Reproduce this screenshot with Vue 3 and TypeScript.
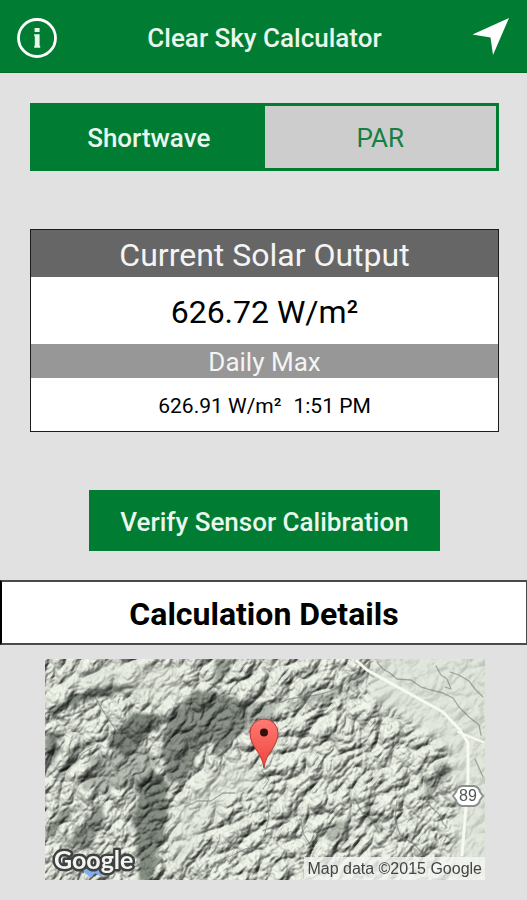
<script setup lang="ts">
import { ref } from 'vue'

type Mode = 'Shortwave' | 'PAR'

const modes: Mode[] = ['Shortwave', 'PAR']
const active = ref<Mode>('Shortwave')
</script>

<template>
  <div class="page">
    <header class="bar">
      <button class="icon-button" type="button" aria-label="Information">
        <svg width="42" height="42" viewBox="0 0 42 42" aria-hidden="true">
          <circle cx="21" cy="21" r="18.5" fill="none" stroke="#fff" stroke-width="2.8" />
          <path d="M18.600 11h5v4h-5zM18.200 17.200h5.400v11.600h.6v2h-6v-2h.6v-9.600h-.6z" fill="#e9f7ec" />
        </svg>
      </button>
      <h1 class="title">Clear Sky Calculator</h1>
      <button class="icon-button" type="button" aria-label="Use my location">
        <svg width="42" height="42" viewBox="0 0 42 42" aria-hidden="true">
          <path d="M38 1 1.500 17.500 19.500 20.500 22 38z" fill="#fff" />
        </svg>
      </button>
    </header>

    <main class="content">
      <div class="segments" role="group" aria-label="Radiation type">
        <button
          v-for="mode in modes"
          :key="mode"
          type="button"
          class="segment"
          :class="{ selected: mode === active }"
          :aria-pressed="mode === active"
          @click="active = mode"
        >
          {{ mode }}
        </button>
      </div>

      <section class="card">
        <h2 class="card-title">Current Solar Output</h2>
        <p class="current">626.72 W/m²</p>
        <h3 class="card-subtitle">Daily Max</h3>
        <p class="daily"><span>626.91 W/m²</span><span>1:51 PM</span></p>
      </section>

      <button class="verify" type="button">Verify Sensor Calibration</button>
    </main>

    <h2 class="details">Calculation Details</h2>

    <div class="map">
      <svg class="map-svg" viewBox="0 0 440 221" role="img" aria-label="Terrain map">
        <defs>
          <filter id="relief" x="0" y="0" width="100%" height="100%" color-interpolation-filters="sRGB">
            <feTurbulence type="turbulence" baseFrequency="0.032 0.05" numOctaves="5" seed="14" result="n" />
            <feColorMatrix in="n" type="matrix" values="0 0 0 0 0  0 0 0 0 0  0 0 0 0 0  1 0 0 0 0" result="h" />
            <feGaussianBlur in="h" stdDeviation="0.4" result="hb" />
            <feDiffuseLighting in="hb" surfaceScale="7" diffuseConstant="1.08" lighting-color="#e6ebe0">
              <feDistantLight azimuth="290" elevation="60" />
            </feDiffuseLighting>
          </filter>
          <filter id="rough" x="-10%" y="-10%" width="120%" height="120%" color-interpolation-filters="sRGB">
            <feTurbulence type="fractalNoise" baseFrequency="0.09" numOctaves="2" seed="5" />
            <feDisplacementMap in="SourceGraphic" scale="14" xChannelSelector="R" yChannelSelector="G" />
            <feGaussianBlur stdDeviation="1.5" />
          </filter>
          <filter id="soft" x="-20%" y="-20%" width="140%" height="140%">
            <feGaussianBlur stdDeviation="5" />
          </filter>
          <linearGradient id="pin" x1="0" y1="0" x2="0" y2="1">
            <stop offset="0" stop-color="#ff7b74" />
            <stop offset="1" stop-color="#ee443d" />
          </linearGradient>
        </defs>

        <rect width="440" height="221" fill="#dbe1d6" />
        <g transform="rotate(-50 220 110)">
          <rect x="-40" y="-140" width="520" height="500" filter="url(#relief)" opacity="0.85" />
        </g>

        <!-- valley floor and bright slopes -->
        <g fill="#dfe5da" filter="url(#soft)">
          <path d="M330 -10H450V230H405L412 150 405 95 385 75 345 50 325 42z" opacity="0.8" />
          <path d="M20 20 60 3 130 5 140 30 120 48 80 32 20 28z" opacity="0.45" />
          <path d="M128 150 165 112 205 98 216 125 175 145 150 190 125 215z" opacity="0.5" />
        </g>

        <!-- shaded slopes -->
        <g class="shade" fill="#6a716b" filter="url(#rough)">
          <path d="M3 50 30 35 60 28 85 25 90 30 50 40 20 48 3 56z" opacity="0.75" />
          <path d="M62 80 82 66 84 54 120 56 114 72 96 80 82 98 65 90z" opacity="0.8" />
          <path d="M126 54 140 35 160 30 180 36 197 45 205 60 196 76 180 90 172 96 166 82 150 96 148 112 136 125 124 122 118 104 116 82z" opacity="0.7" />
          <path d="M197 45 224 42 236 46 228 60 205 78 200 60z" opacity="0.4" />
          <path d="M94 117 108 110 122 122 124 145 119 178 112 205 104 223 92 222 95 190 88 168z" opacity="0.75" />
          <path d="M0 74 16 72 12 95 0 112z" opacity="0.7" />
          <path d="M12 117 36 78 48 84 28 108z" opacity="0.55" />
          <path d="M22 184 38 160 58 146 62 160 42 192z" opacity="0.65" />
          <path d="M0 167 18 152 32 146 16 168 0 184z" opacity="0.65" />
          <path d="M46 96 74 92 104 86 114 104 88 126 56 134 34 128z" opacity="0.4" />
          <path d="M166 24 174 0 190 0 180 20z" opacity="0.6" />
          <path d="M238 44 272 36 300 26 318 8 322 12 304 34 280 42 244 48z" opacity="0.35" />
          <path d="M272 170 298 160 306 172 288 182z" opacity="0.4" />
          <path d="M376 120 398 104 410 108 396 128 380 136z" opacity="0.45" />
          <path d="M320 140 338 168 334 176 318 152z" opacity="0.45" />
        </g>

        <!-- ridge and stream lines -->
        <g fill="none" stroke="#6c746b" stroke-width="1.3" stroke-linecap="round" stroke-linejoin="round" opacity="0.55">
          <path d="M230 45 244 40 258 38 272 36 286 32 300 24 308 16 316 10 328 2" />
          <path d="M332 3 338 10 345 14 352 20 366 21 376 28 386 31 398 34 408 39 414 48 424 58 434 66 436 76" />
          <path d="M391 7 396 16 402 20 406 30 400 28M405 13 414 16 424 22 430 30 438 38" />
          <path d="M380 139 386 148 394 155 398 164 402 169M352 142 350 160 355 176 364 182 370 186 378 195" />
          <path d="M256 160 258 174 264 184 268 190M217 112 224 121 218 130M222 140 224 158 218 182" />
          <path d="M164 215 170 204 178 200 188 196 200 190 210 188 218 180M140 148 152 142 166 142 178 134 190 134" />
          <path d="M2 118 14 108 30 104 38 94 48 88M50 38 58 52 70 70 64 80" />
          <path d="M310 140 316 152 326 160 334 174M430 100 438 118" />
        </g>

        <g fill="none" stroke="#f7f9f2" stroke-linejoin="round" stroke-linecap="round">
          <path d="M312 2 322 11 398 53 415 71 423 84V124L417 196" stroke-width="3" />
          <path d="M413 73 438 83" stroke-width="2" />
        </g>

        <path d="M417 127H429Q434 128 435 133L438 137 435 141Q434 146 429 147H417Q412 146 411 141L408 137 411 133Q412 128 417 127z" fill="#fff" stroke="#8a908a" stroke-width="2" stroke-linejoin="round" />
        <text class="route" x="423" y="142" text-anchor="middle">89</text>

        <path d="M35 207 42 210 48 206 53 211 58 209 57 218 50 214 46 219 39 213z" fill="#80adf3" />
        <text class="logo" x="9" y="210">Google</text>

        <path d="M219 109C217 93 205 88 205 74a14 14 0 0 1 28 0C233 88 221 93 219 109z" fill="url(#pin)" stroke="#b73a34" stroke-width="1" />
        <circle cx="219" cy="73.500" r="4" fill="#31100e" />
      </svg>
      <span class="credit">Map data ©2015 Google</span>
    </div>
  </div>
</template>

<style>
body {
  margin: 0;
  background: #e1e1e1;
}
</style>

<style scoped>
.page {
  font-family: Roboto, 'Liberation Sans', sans-serif;
  background: #e1e1e1;
  color: #000;
  padding-bottom: 20px;
}

h1,
h2,
h3,
p {
  margin: 0;
  font-weight: 400;
  text-align: center;
}

button {
  font-family: inherit;
  margin: 0;
  border: 0;
  border-radius: 0;
  cursor: pointer;
}

.bar {
  display: flex;
  align-items: center;
  justify-content: space-between;
  box-sizing: border-box;
  height: 73px;
  padding: 3px 14px 0 16px;
  background: #007c33;
  border-bottom: 1px solid #006b24;
}

.icon-button {
  display: flex;
  padding: 0;
  background: none;
}

.title {
  color: #e9f7ec;
  font-size: 26px;
  font-weight: 500;
  line-height: 32px;
}

.content {
  display: flex;
  flex-direction: column;
  padding: 30px 28px 29px 30px;
}

.segments {
  display: grid;
  grid-template-columns: 1fr 1fr;
  border: 3px solid #007c33;
  background: #007c33;
}

.segment {
  padding: 16px 0 14px;
  background: #cdcdcd;
  color: #158041;
  font-size: 26px;
  line-height: 32px;
}

.segment.selected {
  background: #007c33;
  color: #e9f7ec;
  font-weight: 500;
}

.card {
  margin-top: 58px;
  border: 1px solid #1c1c1c;
  background: #fff;
}

.card-title {
  padding: 6px 0 3px;
  background: #666;
  color: #f4f4f4;
  font-size: 32px;
  line-height: 38px;
}

.current {
  padding: 16px 0 13px;
  font-size: 32px;
  line-height: 38px;
}

.card-subtitle {
  padding: 2px 0 0;
  background: #979797;
  color: #f4f4f4;
  font-size: 26px;
  line-height: 32px;
}

.daily {
  display: flex;
  justify-content: center;
  gap: 12px;
  padding: 12px 0 9px;
  font-size: 21px;
  line-height: 32px;
}

.verify {
  align-self: center;
  width: 75%;
  margin-top: 58px;
  padding: 16px 0 13px;
  background: #007c33;
  color: #e9f7ec;
  font-size: 26px;
  font-weight: 500;
  line-height: 32px;
}

.details {
  padding: 14px 0 11px;
  border: 2px solid #4a4a4a;
  border-left-color: #000;
  border-right-width: 1px;
  background: #fff;
  font-size: 32px;
  font-weight: 700;
  line-height: 36px;
}

.map {
  position: relative;
  margin: 14px 42px 0 45px;
}

.map-svg {
  display: block;
  width: 100%;
}

.shade {
  mix-blend-mode: multiply;
}

.route {
  font: 400 16px 'Liberation Sans', sans-serif;
  fill: #555;
}

.logo {
  font: 700 25px Lato, sans-serif;
  fill: #f3f3f3;
  stroke: #3e423e;
  stroke-width: 5px;
  stroke-linejoin: round;
  paint-order: stroke;
}

.credit {
  position: absolute;
  right: 0;
  bottom: 0;
  padding: 0 3px;
  background: rgba(244, 246, 242, 0.8);
  color: #444;
  font-family: 'Liberation Sans', sans-serif;
  font-size: 16px;
  line-height: 23px;
}
</style>
